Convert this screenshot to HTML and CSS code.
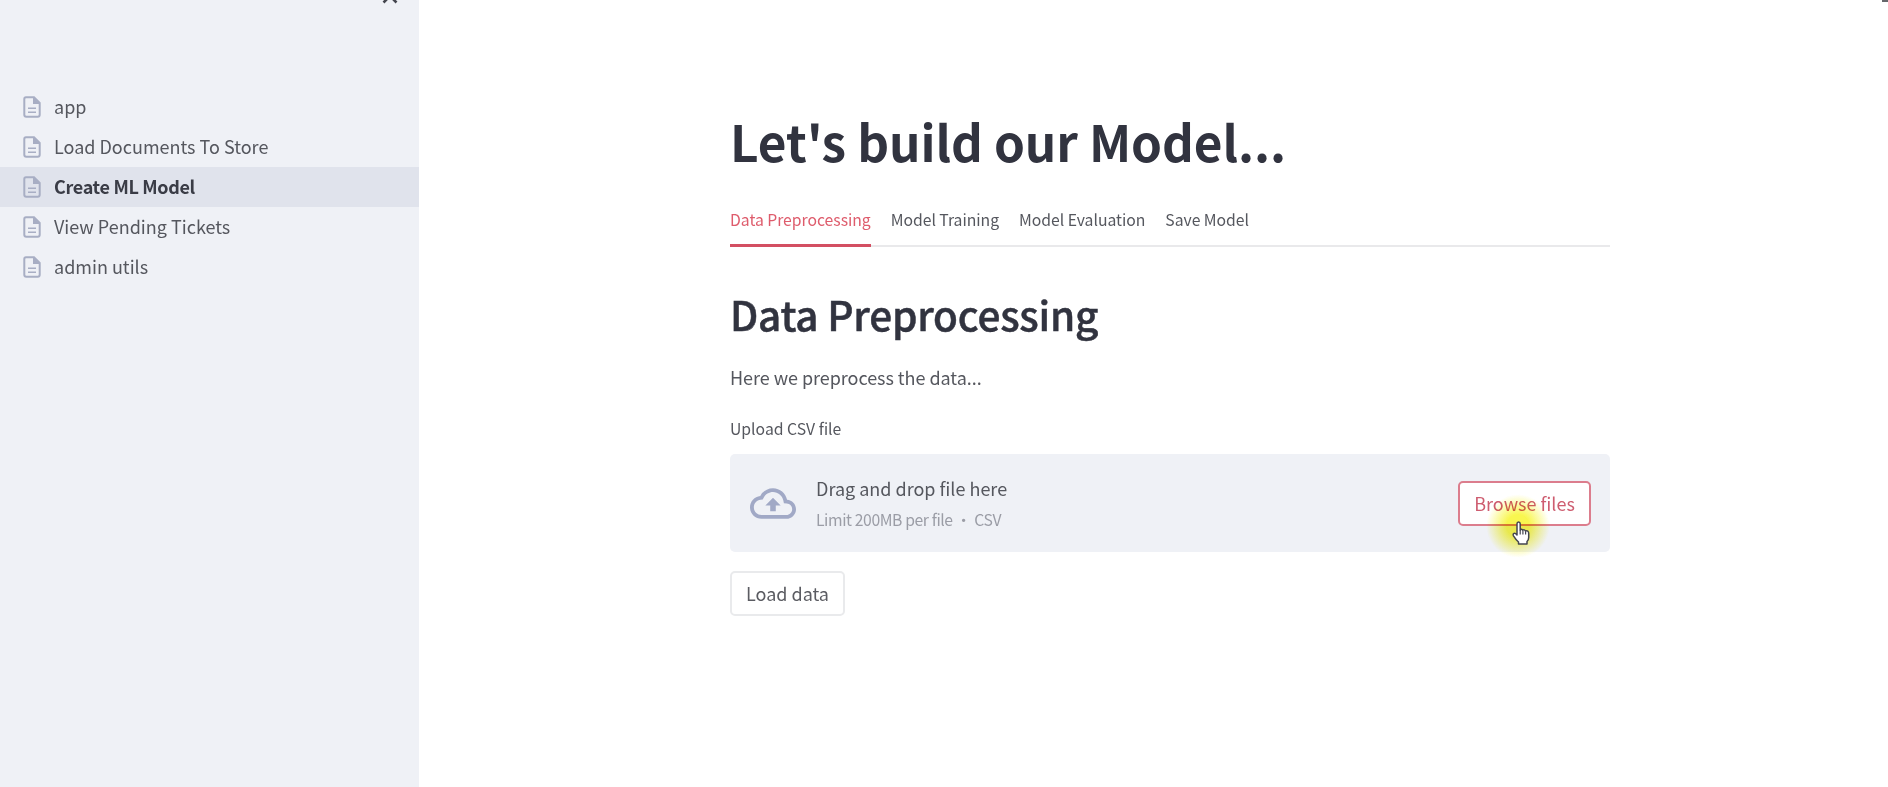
FILE: index.html
```html
<!DOCTYPE html>
<html lang="en">
<head>
<meta charset="utf-8">
<title>Create ML Model</title>
<link rel="stylesheet" href="styles.css">
</head>
<body>
<svg class="defs" aria-hidden="true">
  <symbol id="doc" viewBox="0 0 18 22">
    <path d="M3 1.3H11L16.7 7V18.7Q16.7 20.7 14.7 20.7H3.3Q1.3 20.7 1.3 18.7V3Q1.3 1.3 3 1.3Z" fill="none" stroke="currentColor" stroke-width="2"/>
    <path d="M10 1V8H17Z" fill="currentColor"/>
    <path d="M5 12.2H13M5 16.2H13" stroke="currentColor" stroke-width="1.6"/>
  </symbol>
</svg>
<div class="app">
  <aside class="sidebar">
    <svg class="close" viewBox="0 0 16 16"><path d="M1.5 1.5L14.5 14.5M14.5 1.5L1.5 14.5" fill="none" stroke="currentColor" stroke-width="2.6"/></svg>
    <nav class="nav">
      <a class="nav-item"><svg class="doc"><use href="#doc"/></svg><span>app</span></a>
      <a class="nav-item"><svg class="doc"><use href="#doc"/></svg><span>Load Documents To Store</span></a>
      <a class="nav-item active"><svg class="doc"><use href="#doc"/></svg><span>Create ML Model</span></a>
      <a class="nav-item"><svg class="doc"><use href="#doc"/></svg><span>View Pending Tickets</span></a>
      <a class="nav-item"><svg class="doc"><use href="#doc"/></svg><span>admin utils</span></a>
    </nav>
  </aside>
  <main class="main">
    <div class="corner"></div>
    <div class="content">
      <h1 class="title">Let's build our Model...</h1>
      <div class="tabs">
        <span class="tab selected">Data Preprocessing</span>
        <span class="tab">Model Training</span>
        <span class="tab">Model Evaluation</span>
        <span class="tab">Save Model</span>
      </div>
      <h2 class="heading">Data Preprocessing</h2>
      <p class="text">Here we preprocess the data...</p>
      <div class="label">Upload CSV file</div>
      <div class="dropzone">
        <svg class="cloud" viewBox="0 0 24 16"><path d="M19.35 6.04C18.67 2.59 15.64 0 12 0 9.11 0 6.6 1.64 5.35 4.04 2.34 4.36 0 6.91 0 10c0 3.31 2.69 6 6 6h13c2.76 0 5-2.24 5-5 0-2.64-2.05-4.78-4.65-4.96zM19 14H6c-2.21 0-4-1.79-4-4 0-2.05 1.53-3.76 3.56-3.97l1.07-.11.5-.95C8.08 3.14 9.94 2 12 2c2.62 0 4.88 1.86 5.39 4.43l.3 1.5 1.53.11c1.56.1 2.78 1.41 2.78 2.96 0 1.65-1.35 3-3 3zM8 9h2.55v3h2.9V9H16l-4-4z" fill="currentColor"/></svg>
        <div class="drop-text">
          <span class="drop-main">Drag and drop file here</span>
          <span class="drop-sub">Limit 200MB per file • CSV</span>
        </div>
        <div class="browse-wrap">
          <button class="button browse">Browse files</button>
          <div class="halo"></div>
          <svg class="cursor" viewBox="0 0 18 24"><path d="M5 2.8Q5 1 6.6 1T8.2 2.8V9Q9.2 7.6 10.8 9.2 12.4 8.2 13.5 10 16.7 9.2 16.7 12.5V16.5Q16.7 19 15 20.5V23H6.5V21Q3.8 18.5 1.5 14.8 .6 13 2 12.4 3.3 12 5 14Z" fill="#fff" stroke="#444650" stroke-width="1.5" stroke-linejoin="round"/><path d="M8.2 9V13.5M10.9 9.7V13.5M13.6 10.3V13.5" stroke="#444650" stroke-width="1.2"/></svg>
        </div>
      </div>
      <button class="button load">Load data</button>
    </div>
  </main>
</div>
</body>
</html>
```
FILE: styles.css
```css
@font-face { font-family: "Bullet"; src: local("Noto Sans"), local("Noto Sans Regular"), local("NotoSans-Regular"); unicode-range: U+2022; }
* { box-sizing: border-box; }
body { margin: 0; background: #fff; color: #55575e; font-family: "Noto Sans CJK SC", "Noto Sans", sans-serif; font-size: 18px; line-height: 40px; overflow: hidden; }
.defs { position: absolute; width: 0; height: 0; }
.app { display: flex; height: 787px; }
.sidebar { position: relative; flex: 0 0 419px; background: #eff1f6; padding-top: 87px; }
.close { position: absolute; left: 382px; top: -12px; width: 16px; height: 16px; color: #44464e; }
.nav { display: flex; flex-direction: column; }
.nav-item { display: flex; align-items: center; gap: 13px; height: 40px; padding: 0 0 1px 23px; line-height: 39px; }
.nav-item.active { background: #e0e3ec; color: #3a3c46; font-weight: 700; letter-spacing: -.33px; }
.doc { width: 18px; height: 22px; color: #a8aec4; }
.main { position: relative; flex: 1; padding-left: 311px; }
.corner { position: absolute; right: 0; top: 0; width: 6px; height: 2px; background: #66676b; }
.content { width: 880px; padding-top: 108px; display: flex; flex-direction: column; align-items: flex-start; }
.title { margin: 0; font-size: 49.5px; line-height: 66px; font-weight: 700; letter-spacing: -.07px; color: #31333f; }
.tabs { display: flex; gap: 20px; align-self: stretch; height: 50px; margin-top: 23px; border-bottom: 2px solid #e9e9eb; font-size: 15.75px; letter-spacing: -.03px; line-height: 46px; }
.tab { height: 50px; }
.tab.selected { color: #de5c6c; border-bottom: 3px solid #d34f62; }
.heading { margin: 40px 0 0; font-size: 40.5px; line-height: 54px; font-weight: 500; letter-spacing: -.22px; color: #31333f; -webkit-text-stroke: .5px #31333f; }
.text { margin: 20px 0 0; line-height: 32px; letter-spacing: -.04px; }
.label { margin-top: 20px; font-size: 15.75px; line-height: 32px; }
.dropzone { display: flex; align-items: center; align-self: stretch; height: 98px; margin-top: 9px; padding: 0 19px 0 20px; background: #eff1f6; border-radius: 5px; }
.cloud { width: 46px; height: 31px; color: #a1a9c6; }
.drop-text { display: flex; flex-direction: column; margin-left: 20px; padding-top: 2px; }
.drop-main { line-height: 31px; }
.drop-sub { font-family: "Liberation Sans Bullet", "Noto Sans CJK SC", sans-serif; font-size: 15.75px; line-height: 31px; letter-spacing: -.43px; word-spacing: .1px; color: #9b9da6; }
.browse-wrap { position: relative; margin-left: auto; }
.button { display: block; height: 45px; padding: 0 0 1px; font: inherit; line-height: 40px; text-align: center; white-space: nowrap; color: #5b5c62; background: #fff; border: 2px solid #e9eaec; border-radius: 5px; }
.browse { width: 133px; padding-bottom: 2px; border-color: #dc7d8d; color: #ce5d70; }
.load { width: 115px; margin-top: 19px; }
.halo { position: absolute; left: 28px; top: 13px; width: 64px; height: 64px; border-radius: 50%; background: radial-gradient(circle, #f8f650 25%, #f8f65000 70%); mix-blend-mode: multiply; }
.cursor { position: absolute; left: 54px; top: 40px; width: 18px; height: 24px; }
```
